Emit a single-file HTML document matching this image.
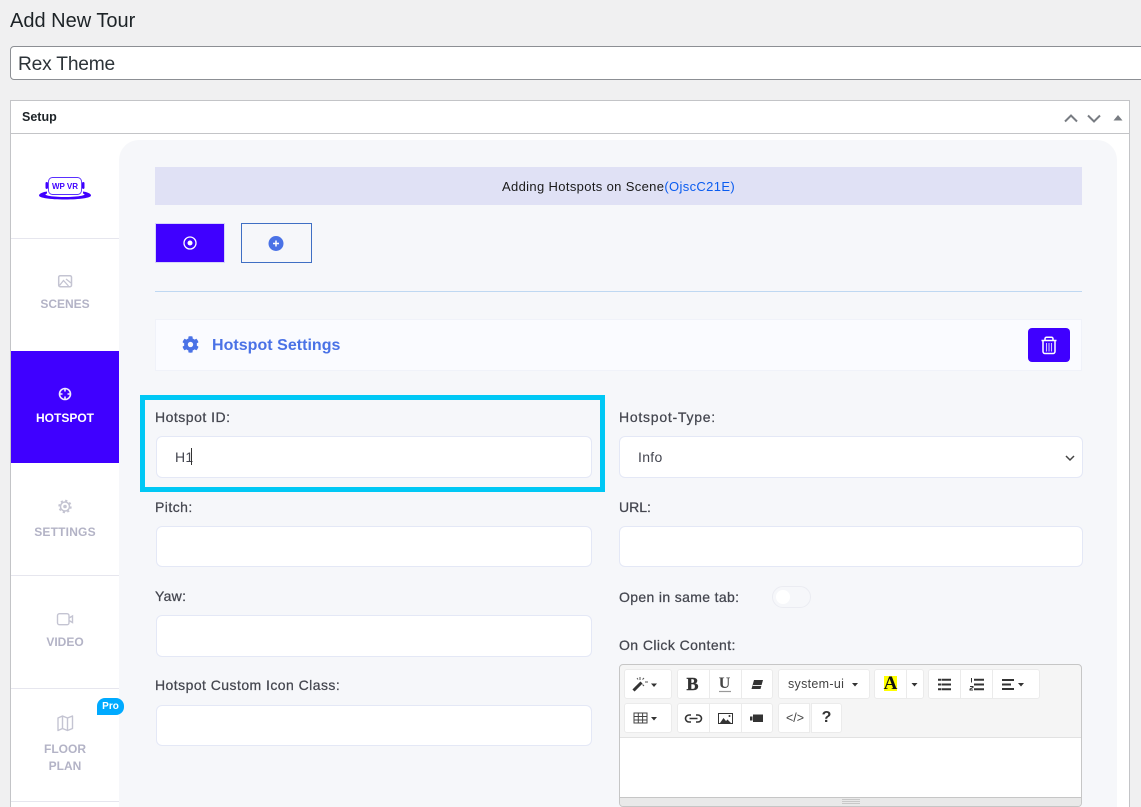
<!DOCTYPE html>
<html><head><meta charset="utf-8"><style>
html,body{margin:0;padding:0;width:1141px;height:807px;overflow:hidden;background:#f0f0f1;font-family:"Liberation Sans",sans-serif}
#w{position:relative;width:1141px;height:807px;overflow:hidden}
.a{position:absolute;box-sizing:border-box}
.t{position:absolute;white-space:nowrap;line-height:18px;height:18px}
.l{color:#44464f;font-size:14px;letter-spacing:.3px;-webkit-text-stroke:.25px #44464f}
.i{background:#fff;border:1px solid #e4e8f6;border-radius:6px}
.s{color:#b3b3c6;font-size:12px;font-weight:bold;left:11px;width:108px;text-align:center}
.b{background:#fff;border:1px solid #ebebeb;border-radius:3px;height:30px}
svg{position:absolute;left:0;top:0}
</style></head><body><div id="w">
<div class="t" style="left:10px;top:11px;font-size:20px;color:#1d2327;line-height:20px;height:20px">Add New Tour</div>
<div class="a" style="left:10px;top:46px;width:1160px;height:34px;background:#fff;border:1px solid #8c8f94;border-radius:4px"></div>
<div class="t" style="left:18px;top:55px;font-size:19.200px;letter-spacing:-.2px;color:#2c3338;line-height:20px;height:20px">Rex Theme</div>

<div class="a" style="left:10px;top:100px;width:1120px;height:720px;background:#fff;border:1px solid #c3c4c7"></div>
<div class="a" style="left:11px;top:133px;width:1118px;height:1px;background:#c3c4c7"></div>
<div class="t" style="left:22px;top:108px;font-size:12.500px;font-weight:bold;color:#1d2327">Setup</div>

<div class="a" style="left:119px;top:140px;width:998px;height:680px;background:#f6f7fa;border-radius:20px 20px 0 0"></div>
<div class="a" style="left:119px;top:240px;width:20px;height:580px;background:#f6f7fa"></div>

<div class="a" style="left:11px;top:238px;width:108px;height:1px;background:#e6e6ee"></div>
<div class="a" style="left:11px;top:351px;width:108px;height:112px;background:#3f00ff"></div>
<div class="a" style="left:11px;top:575px;width:108px;height:1px;background:#e6e6ee"></div>
<div class="a" style="left:11px;top:688px;width:108px;height:1px;background:#e6e6ee"></div>
<div class="a" style="left:11px;top:801px;width:108px;height:1px;background:#e6e6ee"></div>

<div class="t s" style="top:295px">SCENES</div>
<div class="t s" style="top:409px;color:#fff">HOTSPOT</div>
<div class="t s" style="top:523px;letter-spacing:.2px">SETTINGS</div>
<div class="t s" style="top:633px">VIDEO</div>
<div class="t s" style="top:740px">FLOOR</div>
<div class="t s" style="top:757px">PLAN</div>
<div class="a" style="left:97px;top:698px;width:27px;height:17px;background:#00aaff;border-radius:8px 8px 8px 0;color:#fff;font-size:10px;font-weight:bold;text-align:center;line-height:17px">Pro</div>

<div class="a" style="left:155px;top:167px;width:927px;height:38px;background:#e0e1f5"></div>
<div class="t" style="left:502px;top:178px;font-size:13px;letter-spacing:.35px;color:#1a1a1a">Adding Hotspots on Scene<span style="color:#0a5cf0">(OjscC21E)</span></div>

<div class="a" style="left:155px;top:223px;width:70px;height:40px;background:#3f00ff;border:1px solid #d6d4fb"></div>
<div class="a" style="left:241px;top:223px;width:71px;height:40px;border:1px solid #3f6fc4"></div>
<div class="a" style="left:155px;top:291px;width:927px;height:1px;background:#bfd8f2"></div>
<div class="a" style="left:155px;top:319px;width:927px;height:52px;background:#fafbff;border:1px solid #f0f2f9"></div>
<div class="t" style="left:212px;top:337px;font-size:16px;font-weight:bold;letter-spacing:.03px;color:#4a72e6">Hotspot Settings</div>
<div class="a" style="left:1028px;top:328px;width:42px;height:34px;background:#3f00ff;border-radius:4px"></div>

<div class="a" style="left:140px;top:395px;width:465px;height:97px;border:5px solid #00c8f5"></div>

<div class="t l" style="left:155px;top:408px;letter-spacing:.5px">Hotspot ID:</div>
<div class="a i" style="left:156px;top:436px;width:436px;height:42px"></div>
<div class="t" style="left:175px;top:448px;font-size:14px;color:#444650;letter-spacing:.3px">H1</div>
<div class="a" style="left:191px;top:448px;width:1px;height:17px;background:#333"></div>
<div class="t l" style="left:155px;top:498px;letter-spacing:.45px">Pitch:</div>
<div class="a i" style="left:156px;top:526px;width:436px;height:41px"></div>
<div class="t l" style="left:155px;top:587px">Yaw:</div>
<div class="a i" style="left:156px;top:615px;width:436px;height:42px"></div>
<div class="t l" style="left:155px;top:676px;letter-spacing:.45px">Hotspot Custom Icon Class:</div>
<div class="a i" style="left:156px;top:705px;width:436px;height:41px"></div>

<div class="t l" style="left:619px;top:408px;letter-spacing:.75px">Hotspot-Type:</div>
<div class="a i" style="left:619px;top:436px;width:464px;height:42px"></div>
<div class="t" style="left:638px;top:448px;font-size:14px;color:#444650;letter-spacing:.3px">Info</div>
<div class="t l" style="left:619px;top:498px;letter-spacing:0">URL:</div>
<div class="a i" style="left:619px;top:526px;width:464px;height:41px"></div>
<div class="t l" style="left:619px;top:588px;letter-spacing:.35px">Open in same tab:</div>
<div class="a" style="left:772px;top:586px;width:39px;height:22px;border:1px solid #ebecf2;border-radius:11px;background:#f6f7fa"></div>
<div class="a" style="left:776px;top:590px;width:14px;height:14px;border-radius:50%;background:#fff"></div>
<div class="t l" style="left:619px;top:636px;letter-spacing:.42px">On Click Content:</div>

<div class="a" style="left:619px;top:664px;width:463px;height:143px;background:#f5f5f5;border:1px solid #c6c6c6;border-radius:4px;overflow:hidden">
<div class="a" style="left:0;top:72px;width:461px;height:61px;background:#fff;border-top:1px solid #e2e2e2;border-bottom:1px solid #c6c6c6"></div>
<div class="a" style="left:0;top:133px;width:461px;height:9px;background:#e9e9e9"></div>
</div>

<div class="a b" style="left:624px;top:669px;width:48px"></div>
<div class="a b" style="left:677px;top:669px;width:33px;border-radius:3px 0 0 3px"></div>
<div class="a b" style="left:709px;top:669px;width:33px;border-radius:0"></div>
<div class="a b" style="left:741px;top:669px;width:32px;border-radius:0 3px 3px 0"></div>
<div class="a b" style="left:778px;top:669px;width:92px"></div>
<div class="t" style="left:788px;top:675px;font-size:12.500px;letter-spacing:.3px;color:#444">system-ui</div>
<div class="a b" style="left:874px;top:669px;width:33px;border-radius:3px 0 0 3px"></div>
<div class="a b" style="left:906px;top:669px;width:18px;border-radius:0 3px 3px 0"></div>
<div class="a b" style="left:928px;top:669px;width:33px;border-radius:3px 0 0 3px"></div>
<div class="a b" style="left:960px;top:669px;width:33px;border-radius:0"></div>
<div class="a b" style="left:992px;top:669px;width:48px;border-radius:0 3px 3px 0"></div>

<div class="a b" style="left:624px;top:703px;width:48px"></div>
<div class="a b" style="left:677px;top:703px;width:33px;border-radius:3px 0 0 3px"></div>
<div class="a b" style="left:709px;top:703px;width:33px;border-radius:0"></div>
<div class="a b" style="left:741px;top:703px;width:32px;border-radius:0 3px 3px 0"></div>
<div class="a b" style="left:778px;top:703px;width:32px;border-radius:3px 0 0 3px"></div>
<div class="a b" style="left:811px;top:703px;width:31px;border-radius:0 3px 3px 0"></div>

<div class="t" style="left:685px;top:675px;width:15px;text-align:center;font:bold 18px/18px 'Liberation Serif',serif;color:#333;-webkit-text-stroke:.4px #333">B</div>
<div class="t" style="left:717px;top:675px;width:15px;text-align:center;font:bold 16px/18px 'Liberation Serif',serif;color:#444">U</div>
<div class="a" style="left:884px;top:676px;width:13px;height:15px;background:#ff0"></div>
<div class="t" style="left:882px;top:675px;width:17px;text-align:center;font:bold 19px/18px 'Liberation Serif',serif;color:#111">A</div>
<div class="t" style="left:784px;top:709px;width:22px;text-align:center;font-size:12.500px;color:#444">&lt;/&gt;</div>
<div class="t" style="left:811px;top:709px;width:31px;text-align:center;font-size:16px;font-weight:bold;color:#333">?</div>

<svg width="1141" height="807" viewBox="0 0 1141 807" fill="none">
<!-- header arrows -->
<path d="M1065 121.500l6-6 6 6M1088 115.500l6 6 6-6" stroke="#787c82" stroke-width="2"/>
<path d="M1113.500 120.500l4.500-5.500 4.500 5.500z" fill="#787c82"/>
<!-- logo -->
<path d="M39 195.500c0-2 4-3.500 8-4v2c-1 .3-1.500.7-1.500 1 0 1.200 9 2.500 19.500 2.500s19.500-1.300 19.500-2.500c0-.3-.5-.7-1.500-1v-2c4 .5 8 2 8 4 0 2.300-11 4-26 4s-26-1.700-26-4z" fill="#3f00ff"/>
<rect x="48.500" y="177.500" width="33" height="17" rx="4" fill="#fff" stroke="#5a30ff" stroke-width=".9"/>
<rect x="45.500" y="182" width="2.500" height="7" rx="1.200" fill="#3f00ff"/><rect x="82" y="182" width="2.500" height="7" rx="1.200" fill="#3f00ff"/>
<text x="65" y="189" font-family="Liberation Sans" font-size="8" font-weight="bold" fill="#3f00ff" text-anchor="middle">WP VR</text>
<!-- scenes -->
<rect x="58.700" y="275.700" width="12.800" height="11" rx="1.500" stroke="#c4c4d2" stroke-width="1.500"/>
<path d="M59.500 285.500l4-5 5 5.500M66 279l5 4" stroke="#c4c4d2" stroke-width="1.300"/>
<!-- hotspot -->
<circle cx="65" cy="394" r="5.500" stroke="#efeaff" stroke-width="1.600"/>
<path d="M65 388v3.500M65 396.500v3.500M59 394h3.500M67.500 394h3.500" stroke="#efeaff" stroke-width="1.600"/>
<!-- settings -->
<circle cx="65" cy="506.500" r="4.500" stroke="#c4c4d2" stroke-width="1.500"/>
<circle cx="65" cy="506.500" r="5.800" stroke="#c4c4d2" stroke-width="1.800" stroke-dasharray="2.200 2.350"/>
<circle cx="65" cy="506.500" r="1.800" fill="#c4c4d2"/>
<!-- video -->
<path d="M59.500 613.700h7.500a2 2 0 0 1 2 2v7a2 2 0 0 1-2 2h-7.500a2 2 0 0 1-2-2v-7a2 2 0 0 1 2-2zM69 618l3.500-2v6.500l-3.500-2" stroke="#c4c4d2" stroke-width="1.400"/>
<!-- map -->
<path d="M58 718l4.500-2 5 2 5-2v12.500l-5 2-5-2-4.500 2zM62.500 716v12.500M67.500 718v12.500" stroke="#c4c4d2" stroke-width="1.400" stroke-linejoin="round"/>
<!-- target button -->
<circle cx="190" cy="243" r="6" stroke="#fff" stroke-width="1.300"/><circle cx="190" cy="243" r="2.500" fill="#fff"/>
<!-- add button -->
<circle cx="276" cy="243.500" r="7.500" fill="#4a72e6"/><path d="M273 243.500h6M276 240.500v6" stroke="#fff" stroke-width="1.500"/>
<!-- gear -->
<svg x="182" y="336" width="17" height="17" viewBox="0 0 512 512"><path fill="#4a72e6" d="M487.4 315.700l-42.600-24.600c4.300-23.200 4.300-47 0-70.200l42.600-24.600c4.900-2.800 7.100-8.600 5.500-14-11.100-35.600-30-67.800-54.700-94.600-3.800-4.100-10-5.100-14.800-2.300L380.800 110c-17.900-15.400-38.500-27.300-60.800-35.100V25.800c0-5.600-3.900-10.500-9.400-11.700-36.700-8.200-74.300-7.800-109.200 0-5.500 1.200-9.400 6.100-9.400 11.700V75c-22.200 7.900-42.800 19.800-60.800 35.100L88.700 85.500c-4.900-2.800-11-1.900-14.800 2.300-24.700 26.700-43.600 58.900-54.700 94.600-1.700 5.400.6 11.200 5.500 14L67.300 221c-4.300 23.200-4.300 47 0 70.200l-42.600 24.600c-4.900 2.800-7.100 8.600-5.500 14 11.100 35.600 30 67.800 54.700 94.600 3.800 4.100 10 5.100 14.800 2.300l42.600-24.600c17.900 15.400 38.500 27.300 60.800 35.100v49.200c0 5.600 3.900 10.500 9.400 11.700 36.700 8.200 74.300 7.800 109.200 0 5.500-1.200 9.400-6.100 9.400-11.700v-49.200c22.200-7.900 42.800-19.800 60.800-35.100l42.600 24.600c4.900 2.800 11 1.900 14.800-2.300 24.700-26.700 43.600-58.900 54.700-94.600 1.500-5.500-.7-11.300-5.600-14.100zM256 336c-44.100 0-80-35.900-80-80s35.900-80 80-80 80 35.900 80 80-35.900 80-80 80z"/></svg>
<!-- trash -->
<path d="M1041.500 340.500h15M1045 340.500v-1.800a1.500 1.500 0 0 1 1.500-1.500h5a1.500 1.500 0 0 1 1.500 1.500v1.800M1043 341v10.500a2 2 0 0 0 2 2h8a2 2 0 0 0 2-2v-10.500" stroke="#fff" stroke-width="1.500"/>
<path d="M1046.500 343v8.500M1049 343v8.500M1051.500 343v8.500" stroke="#cfc4ff" stroke-width="1.100"/>
<!-- select chevron -->
<path d="M1066 456l4 4 4-4" stroke="#444" stroke-width="1.500"/>
<!-- wand -->
<path d="M633.500 690.500l8-8" stroke="#333" stroke-width="3"/><path d="M640 677v3M645 682h3M644 678l-1.500 1.500M644 686l-1.500-1.500M637 678l1 1.500" stroke="#555" stroke-width="1"/>
<!-- carets -->
<path d="M651 683.500h6l-3 3.500zM852 683h6l-3 3.500zM911.500 683h6l-3 3.500zM1018 683h6l-3 3.500zM651 717h6l-3 3.500z" fill="#333"/>
<!-- U underline -->
<path d="M719 691.500h12" stroke="#999" stroke-width="1.200"/>
<!-- eraser -->
<path d="M754 680h9l-2.500 9h-9z" fill="#333"/><path d="M752.800 685.500h9.500" stroke="#fff" stroke-width=".9"/>
<!-- lists -->
<path d="M938 679.700h3M938 684.500h3M938 689.300h3" stroke="#333" stroke-width="2"/><path d="M941.500 679.700h9.500M941.500 684.500h9.500M941.500 689.300h9.500" stroke="#333" stroke-width="2"/>
<path d="M974 679.700h10M974 684.500h10M974 689.300h10" stroke="#333" stroke-width="2"/><path d="M971.500 678v4.500M970 686.500h3v1l-3 1.500v1h3" stroke="#333" stroke-width="1"/>
<path d="M1002 680h12M1002 684.500h9M1002 689h12" stroke="#333" stroke-width="2"/>
<!-- table -->
<path d="M634 713h13v10h-13zM634 716.500h13M634 720h13M638.300 713v10M642.600 713v10" stroke="#444" stroke-width="1"/>
<!-- link -->
<path d="M691 722h-2a3.500 3.500 0 0 1 0-7h2M696 715h2a3.500 3.500 0 0 1 0 7h-2M689.500 718.500h8" stroke="#333" stroke-width="1.600"/>
<!-- picture -->
<rect x="718.500" y="713.500" width="14" height="10" stroke="#333"/><path d="M720 723l3.500-5 2.500 3 1.500-1.500 3.500 3.500z" fill="#333"/><circle cx="729.500" cy="716" r="1" fill="#333"/>
<!-- video -->
<path d="M750 716.500h2.500v4h-2.500zM753 714.500h10v7.500h-10z" fill="#333"/>
<!-- grip -->
<path d="M842 799.500h18M842 801.500h18M842 803.500h18" stroke="#bdbdbd" stroke-width=".8"/>
</svg>
</div></body></html>
